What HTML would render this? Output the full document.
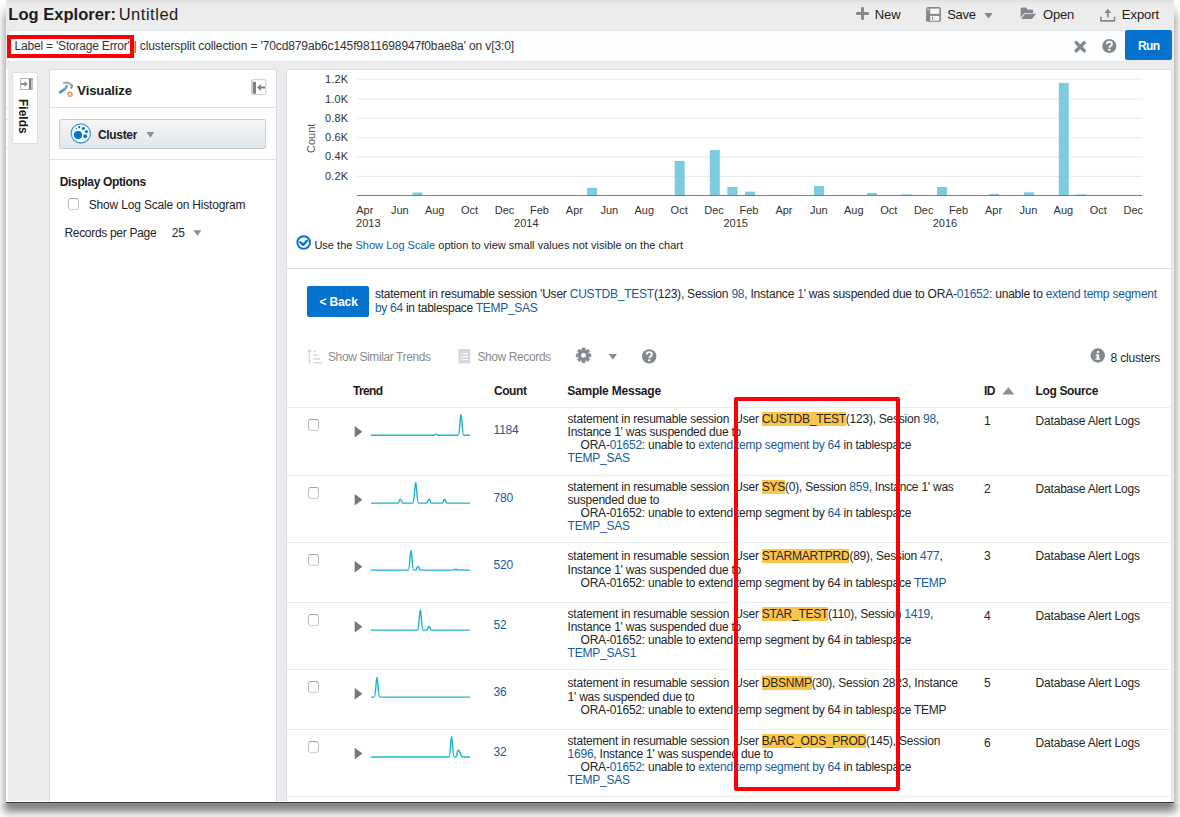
<!DOCTYPE html>
<html>
<head>
<meta charset="utf-8">
<title>Log Explorer</title>
<style>
*{box-sizing:border-box;margin:0;padding:0}
html,body{width:1180px;height:817px;overflow:hidden;background:#fff}
body{font-family:"Liberation Sans",sans-serif;font-size:12px;color:#252525;position:relative}
.abs{position:absolute}
#win{position:absolute;left:6px;top:-40px;width:1168px;height:842px;background:#ececec;box-shadow:0 1.2px 0 0 #3a3a3a;overflow:hidden}
#app{position:absolute;left:-6px;top:40px;width:1180px;height:817px}
a,.lk{color:#145c9e;text-decoration:none}
.panel{position:absolute;background:#fff;border:1px solid #d9e0e8}
.t{position:absolute;white-space:nowrap;line-height:14px;font-size:12px}
.hl{background:#fbc54a}
.hr{position:absolute;left:287px;width:883px;height:1px;background:#e8ecef}
.cb{position:absolute;left:308px;width:11px;height:12px;border:1px solid #bdbdbd;border-top-color:#a2a2a2;border-bottom-color:#d2d2d2;border-radius:3px;background:#fff}
.tri{position:absolute;left:354.7px;width:0;height:0;border-left:7.7px solid #73777d;border-top:5.8px solid transparent;border-bottom:5.8px solid transparent}
.m i{display:inline-block;width:13px}
q{quotes:none;margin-left:1.7px;margin-right:-1.7px}
q:before,q:after{content:none}
</style>
</head>
<body>
<div class="abs" style="left:6px;top:780px;width:1168px;height:22px;box-shadow:0 8px 9px 2px rgba(0,0,0,.5);clip-path:inset(23.3px -20px -40px -20px)"></div>
<div class="abs" style="left:0;top:0;width:6px;height:803.2px;background:linear-gradient(to right,#f1f1f1,#e6e6e6 25%,#d4d4d4 55%,#c1c1c1)"></div>
<div class="abs" style="left:1174px;top:0;width:6px;height:803.2px;background:linear-gradient(to left,#f1f1f1,#e6e6e6 25%,#d4d4d4 55%,#c1c1c1)"></div>
<div class="abs" style="left:0;top:0;width:1180px;height:20px;background:linear-gradient(#fff,rgba(255,255,255,.85) 30%,rgba(255,255,255,0))"></div>
<div id="win"><div id="app">

<div class="abs" style="left:6px;top:801px;width:1168px;height:1px;background:#fff"></div>
<div class="abs" style="left:6px;top:0;width:1168px;height:5px;background:linear-gradient(#dfdfdf,#e6e6e6 50%,#ececec)"></div>
<!-- query bar -->
<div class="abs" style="left:8px;top:30px;width:1118px;height:31.5px;background:#fcfdfe;border:1px solid #e1e7eb;border-right:none;border-radius:2px 0 0 2px"></div>
<div class="abs" style="left:7px;top:35px;width:127px;height:22.6px;border:4px solid #fb0007"></div>
<div class="abs" style="left:1125px;top:29.5px;width:46.5px;height:30.3px;background:#0572ce;border-radius:2px"></div>

<!-- panels -->
<div class="abs" style="left:6px;top:69px;width:2px;height:740px;background:#fff"></div>
<div class="abs" style="left:6px;top:107px;width:2px;height:1px;background:#e3e8ee"></div><div class="abs" style="left:6px;top:119px;width:2px;height:1px;background:#e3e8ee"></div><div class="abs" style="left:6px;top:148px;width:2px;height:1px;background:#e3e8ee"></div>
<div class="panel" style="left:12px;top:72px;width:26px;height:72px;border-radius:2px"></div>
<div class="panel" style="left:49px;top:69px;width:228px;height:740px"></div>
<div class="abs" style="left:50px;top:107px;width:226px;height:1px;background:#dde3e9"></div>
<div class="abs" style="left:50px;top:159px;width:226px;height:1px;background:#dde3e9"></div>
<div class="panel" style="left:286px;top:69px;width:886px;height:200px"></div>
<div class="panel" style="left:286px;top:268px;width:886px;height:560px"></div>

<!-- fields tab -->
<div class="t" style="left:29.5px;top:98.7px;font-weight:bold;color:#1c1c1c;transform-origin:0 0;transform:rotate(90deg)">Fields</div>

<!-- visualize panel -->
<div class="abs" style="left:59.3px;top:119.3px;width:206.5px;height:29.5px;border:1px solid #c4ced7;background:linear-gradient(#f4f6f7,#e3e7ea);border-radius:2px"></div>
<div class="cb" style="left:68px;top:198px;height:11.5px"></div>

<!-- chart y title -->
<div class="t" style="left:304.5px;top:153px;font-size:11px;line-height:13px;color:#555;transform-origin:0 0;transform:rotate(-90deg)">Count</div>

<!-- back -->
<div class="abs" style="left:307px;top:286.3px;width:62px;height:30.5px;background:#0572ce;border-radius:2px"></div>

<div class="t" style="left:8.3px;top:5.4px;font-size:16.5px;line-height:19px;font-weight:bold;color:#1c1c1c;letter-spacing:0.033px;">Log Explorer:</div>
<div class="t" style="left:118.7px;top:5.4px;font-size:16.5px;line-height:19px;color:#1c1c1c;letter-spacing:0.518px;">Untitled</div>
<div class="t" style="left:874.8px;top:6.7px;font-size:13px;line-height:15px;color:#1c1c1c;letter-spacing:-0.105px;">New</div>
<div class="t" style="left:947.2px;top:6.7px;font-size:13px;line-height:15px;color:#1c1c1c;letter-spacing:-0.285px;">Save</div>
<div class="t" style="left:1043.0px;top:6.7px;font-size:13px;line-height:15px;color:#1c1c1c;letter-spacing:-0.178px;">Open</div>
<div class="t" style="left:1121.8px;top:6.7px;font-size:13px;line-height:15px;color:#1c1c1c;letter-spacing:-0.046px;">Export</div>
<div class="t" style="left:14.6px;top:39.1px;color:#333;letter-spacing:-0.202px;">Label = 'Storage Error'</div>
<div class="t" style="left:133.6px;top:39.1px;color:#333;letter-spacing:-0.116px;">| clustersplit collection = '70cd879ab6c145f9811698947f0bae8a' on v[3:0]</div>
<div class="t" style="left:1138.0px;top:38.9px;font-weight:bold;color:#fff;letter-spacing:-0.676px;">Run</div>
<div class="t" style="left:77.3px;top:83.3px;font-size:13px;line-height:15px;font-weight:bold;color:#1c1c1c;letter-spacing:-0.090px;">Visualize</div>
<div class="t" style="left:98.0px;top:127.6px;font-weight:bold;color:#1c1c1c;letter-spacing:-0.335px;">Cluster</div>
<div class="t" style="left:59.8px;top:174.8px;font-weight:bold;color:#1c1c1c;letter-spacing:-0.357px;">Display Options</div>
<div class="t" style="left:88.8px;top:197.9px;letter-spacing:-0.179px;">Show Log Scale on Histogram</div>
<div class="t" style="left:64.4px;top:225.8px;letter-spacing:-0.302px;">Records per Page</div>
<div class="t" style="left:171.8px;top:225.8px;letter-spacing:-0.180px;">25</div>
<div class="t" style="left:325.0px;top:72.9px;font-size:11px;line-height:13px;color:#333;letter-spacing:0.115px;">1.2K</div>
<div class="t" style="left:325.0px;top:92.5px;font-size:11px;line-height:13px;color:#333;letter-spacing:0.115px;">1.0K</div>
<div class="t" style="left:325.0px;top:111.7px;font-size:11px;line-height:13px;color:#333;letter-spacing:0.115px;">0.8K</div>
<div class="t" style="left:325.0px;top:131.2px;font-size:11px;line-height:13px;color:#333;letter-spacing:0.115px;">0.6K</div>
<div class="t" style="left:325.0px;top:150.4px;font-size:11px;line-height:13px;color:#333;letter-spacing:0.115px;">0.4K</div>
<div class="t" style="left:325.0px;top:169.7px;font-size:11px;line-height:13px;color:#333;letter-spacing:0.115px;">0.2K</div>
<div class="t" style="left:356.2px;top:203.7px;font-size:11px;line-height:13px;color:#333;">Apr</div>
<div class="t" style="left:390.9px;top:203.7px;font-size:11px;line-height:13px;color:#333;">Jun</div>
<div class="t" style="left:424.9px;top:203.7px;font-size:11px;line-height:13px;color:#333;">Aug</div>
<div class="t" style="left:461.0px;top:203.7px;font-size:11px;line-height:13px;color:#333;">Oct</div>
<div class="t" style="left:494.7px;top:203.7px;font-size:11px;line-height:13px;color:#333;">Dec</div>
<div class="t" style="left:530.0px;top:203.7px;font-size:11px;line-height:13px;color:#333;">Feb</div>
<div class="t" style="left:565.8px;top:203.7px;font-size:11px;line-height:13px;color:#333;">Apr</div>
<div class="t" style="left:600.4px;top:203.7px;font-size:11px;line-height:13px;color:#333;">Jun</div>
<div class="t" style="left:634.5px;top:203.7px;font-size:11px;line-height:13px;color:#333;">Aug</div>
<div class="t" style="left:670.6px;top:203.7px;font-size:11px;line-height:13px;color:#333;">Oct</div>
<div class="t" style="left:704.3px;top:203.7px;font-size:11px;line-height:13px;color:#333;">Dec</div>
<div class="t" style="left:739.5px;top:203.7px;font-size:11px;line-height:13px;color:#333;">Feb</div>
<div class="t" style="left:775.4px;top:203.7px;font-size:11px;line-height:13px;color:#333;">Apr</div>
<div class="t" style="left:810.0px;top:203.7px;font-size:11px;line-height:13px;color:#333;">Jun</div>
<div class="t" style="left:844.0px;top:203.7px;font-size:11px;line-height:13px;color:#333;">Aug</div>
<div class="t" style="left:880.2px;top:203.7px;font-size:11px;line-height:13px;color:#333;">Oct</div>
<div class="t" style="left:913.9px;top:203.7px;font-size:11px;line-height:13px;color:#333;">Dec</div>
<div class="t" style="left:949.1px;top:203.7px;font-size:11px;line-height:13px;color:#333;">Feb</div>
<div class="t" style="left:985.0px;top:203.7px;font-size:11px;line-height:13px;color:#333;">Apr</div>
<div class="t" style="left:1019.6px;top:203.7px;font-size:11px;line-height:13px;color:#333;">Jun</div>
<div class="t" style="left:1053.6px;top:203.7px;font-size:11px;line-height:13px;color:#333;">Aug</div>
<div class="t" style="left:1089.8px;top:203.7px;font-size:11px;line-height:13px;color:#333;">Oct</div>
<div class="t" style="left:1123.5px;top:203.7px;font-size:11px;line-height:13px;color:#333;">Dec</div>
<div class="t" style="left:356.1px;top:216.5px;font-size:11px;line-height:13px;color:#333;">2013</div>
<div class="t" style="left:514.1px;top:216.5px;font-size:11px;line-height:13px;color:#333;">2014</div>
<div class="t" style="left:723.4px;top:216.5px;font-size:11px;line-height:13px;color:#333;">2015</div>
<div class="t" style="left:932.7px;top:216.5px;font-size:11px;line-height:13px;color:#333;">2016</div>
<div class="t" style="left:314.4px;top:238.7px;font-size:11px;line-height:13px;letter-spacing:0.015px;">Use the <a>Show Log Scale</a> option to view small values not visible on the chart</div>
<div class="t" style="left:319.4px;top:294.7px;font-weight:bold;color:#fff;letter-spacing:-0.122px;">&lt; Back</div>
<div class="t" style="left:374.9px;top:286.9px;letter-spacing:-0.222px;">statement in resumable session 'User <a>CUSTDB_TEST</a>(123), Session <a>98</a>, Instance <a>1</a>' was suspended due to ORA-<a>01652</a>: unable to <a>extend temp segment</a></div>
<div class="t" style="left:374.9px;top:300.6px;letter-spacing:-0.284px;"><a>by 64</a> in tablespace <a>TEMP_SAS</a></div>
<div class="t" style="left:328.0px;top:349.6px;color:#8c8c8c;letter-spacing:-0.387px;">Show Similar Trends</div>
<div class="t" style="left:477.4px;top:349.6px;color:#8c8c8c;letter-spacing:-0.387px;">Show Records</div>
<div class="t" style="left:1110.6px;top:350.5px;letter-spacing:-0.196px;">8 clusters</div>
<div class="t" style="left:352.9px;top:383.7px;font-weight:bold;color:#1c1c1c;letter-spacing:-0.594px;">Trend</div>
<div class="t" style="left:493.9px;top:383.7px;font-weight:bold;color:#1c1c1c;letter-spacing:-0.411px;">Count</div>
<div class="t" style="left:567.2px;top:383.7px;font-weight:bold;color:#1c1c1c;letter-spacing:-0.216px;">Sample Message</div>
<div class="t" style="left:983.9px;top:383.6px;font-weight:bold;color:#1c1c1c;letter-spacing:-0.450px;">ID</div>
<div class="t" style="left:1035.5px;top:383.6px;font-weight:bold;color:#1c1c1c;letter-spacing:-0.352px;">Log Source</div>
<div class="t" style="left:493.6px;top:422.8px;color:#145c9e;letter-spacing:-0.24px">1184</div>
<div class="t" style="left:983.9px;top:413.7px;letter-spacing:-0.24px">1</div>
<div class="t" style="left:1035.6px;top:413.7px;letter-spacing:-0.204px;">Database Alert Logs</div>
<div class="t m" style="left:567.6px;top:412.8px;line-height:13px;letter-spacing:-0.24px">statement in resumable session <q>'</q>User <span class=hl>CUSTDB_TEST</span>(123), Session <a>98</a>,</div>
<div class="t m" style="left:567.6px;top:425.9px;line-height:13px;letter-spacing:-0.24px">Instance 1' was suspended due to</div>
<div class="t m" style="left:567.6px;top:439.0px;line-height:13px;letter-spacing:-0.24px"><i></i>ORA-<a>01652</a>: unable to <a>extend temp segment by 64</a> in tablespace</div>
<div class="t m" style="left:567.6px;top:452.1px;line-height:13px;letter-spacing:-0.24px"><a>TEMP_SAS</a></div>
<div class="t" style="left:493.6px;top:490.7px;color:#145c9e;letter-spacing:-0.24px">780</div>
<div class="t" style="left:983.9px;top:481.6px;letter-spacing:-0.24px">2</div>
<div class="t" style="left:1035.6px;top:481.6px;letter-spacing:-0.204px;">Database Alert Logs</div>
<div class="t m" style="left:567.6px;top:480.7px;line-height:13px;letter-spacing:-0.24px">statement in resumable session <q>'</q>User <span class=hl>SYS</span>(0), Session <a>859</a>, Instance 1' was</div>
<div class="t m" style="left:567.6px;top:493.8px;line-height:13px;letter-spacing:-0.24px">suspended due to</div>
<div class="t m" style="left:567.6px;top:506.9px;line-height:13px;letter-spacing:-0.24px"><i></i>ORA-01652: unable to extend temp segment by <a>64</a> in tablespace</div>
<div class="t m" style="left:567.6px;top:520.0px;line-height:13px;letter-spacing:-0.24px"><a>TEMP_SAS</a></div>
<div class="t" style="left:493.6px;top:557.7px;color:#145c9e;letter-spacing:-0.24px">520</div>
<div class="t" style="left:983.9px;top:548.6px;letter-spacing:-0.24px">3</div>
<div class="t" style="left:1035.6px;top:548.6px;letter-spacing:-0.204px;">Database Alert Logs</div>
<div class="t m" style="left:567.6px;top:550.2px;line-height:13px;letter-spacing:-0.24px">statement in resumable session <q>'</q>User <span class=hl>STARMARTPRD</span>(89), Session <a>477</a>,</div>
<div class="t m" style="left:567.6px;top:563.7px;line-height:13px;letter-spacing:-0.24px">Instance 1' was suspended due to</div>
<div class="t m" style="left:567.6px;top:577.1px;line-height:13px;letter-spacing:-0.24px"><i></i>ORA-01652: unable to extend temp segment by 64 in tablespace <a>TEMP</a></div>
<div class="t" style="left:493.6px;top:617.7px;color:#145c9e;letter-spacing:-0.24px">52</div>
<div class="t" style="left:983.9px;top:608.6px;letter-spacing:-0.24px">4</div>
<div class="t" style="left:1035.6px;top:608.6px;letter-spacing:-0.204px;">Database Alert Logs</div>
<div class="t m" style="left:567.6px;top:607.7px;line-height:13px;letter-spacing:-0.24px">statement in resumable session <q>'</q>User <span class=hl>STAR_TEST</span>(110), Session <a>1419</a>,</div>
<div class="t m" style="left:567.6px;top:620.8px;line-height:13px;letter-spacing:-0.24px">Instance 1' was suspended due to</div>
<div class="t m" style="left:567.6px;top:633.9px;line-height:13px;letter-spacing:-0.24px"><i></i>ORA-01652: unable to extend temp segment by 64 in tablespace</div>
<div class="t m" style="left:567.6px;top:647.0px;line-height:13px;letter-spacing:-0.24px"><a>TEMP_SAS1</a></div>
<div class="t" style="left:493.6px;top:684.7px;color:#145c9e;letter-spacing:-0.24px">36</div>
<div class="t" style="left:983.9px;top:675.6px;letter-spacing:-0.24px">5</div>
<div class="t" style="left:1035.6px;top:675.6px;letter-spacing:-0.204px;">Database Alert Logs</div>
<div class="t m" style="left:567.6px;top:677.2px;line-height:13px;letter-spacing:-0.24px">statement in resumable session <q>'</q>User <span class=hl>DBSNMP</span>(30), Session 2823, Instance</div>
<div class="t m" style="left:567.6px;top:690.7px;line-height:13px;letter-spacing:-0.24px">1' was suspended due to</div>
<div class="t m" style="left:567.6px;top:704.1px;line-height:13px;letter-spacing:-0.24px"><i></i>ORA-01652: unable to extend temp segment by 64 in tablespace TEMP</div>
<div class="t" style="left:493.6px;top:744.6px;color:#145c9e;letter-spacing:-0.24px">32</div>
<div class="t" style="left:983.9px;top:735.5px;letter-spacing:-0.24px">6</div>
<div class="t" style="left:1035.6px;top:735.5px;letter-spacing:-0.204px;">Database Alert Logs</div>
<div class="t m" style="left:567.6px;top:734.6px;line-height:13px;letter-spacing:-0.24px">statement in resumable session <q>'</q>User <span class=hl>BARC_ODS_PROD</span>(145), Session</div>
<div class="t m" style="left:567.6px;top:747.7px;line-height:13px;letter-spacing:-0.24px"><a>1696</a>, Instance 1' was suspended due to</div>
<div class="t m" style="left:567.6px;top:760.8px;line-height:13px;letter-spacing:-0.24px"><i></i>ORA-<a>01652</a>: unable to <a>extend temp segment by 64</a> in tablespace</div>
<div class="t m" style="left:567.6px;top:773.9px;line-height:13px;letter-spacing:-0.24px"><a>TEMP_SAS</a></div>
<div class="hr" style="top:407px"></div>
<div class="cb" style="top:418.9px"></div>
<div class="hr" style="top:475px"></div>
<div class="cb" style="top:486.8px"></div>
<div class="hr" style="top:542px"></div>
<div class="cb" style="top:553.8px"></div>
<div class="hr" style="top:602px"></div>
<div class="cb" style="top:613.8px"></div>
<div class="hr" style="top:669px"></div>
<div class="cb" style="top:680.8px"></div>
<div class="hr" style="top:729px"></div>
<div class="cb" style="top:740.7px"></div>
<div class="hr" style="top:796px"></div>

<svg class="abs" style="left:0;top:0" width="1180" height="817" viewBox="0 0 1180 817">
<rect x="357" y="78.7" width="785.5" height="1" fill="#e6eaed"/>
<rect x="357" y="98.4" width="785.5" height="1" fill="#e6eaed"/>
<rect x="357" y="117.7" width="785.5" height="1" fill="#e6eaed"/>
<rect x="357" y="137.3" width="785.5" height="1" fill="#e6eaed"/>
<rect x="357" y="156.5" width="785.5" height="1" fill="#e6eaed"/>
<rect x="357" y="175.9" width="785.5" height="1" fill="#e6eaed"/>
<rect x="412.5" y="192.5" width="10" height="2.7" fill="#7ccbdf"/>
<rect x="587" y="187.8" width="10" height="7.4" fill="#7ccbdf"/>
<rect x="674.7" y="161" width="10" height="34.2" fill="#7ccbdf"/>
<rect x="709.8" y="150" width="10" height="45.2" fill="#7ccbdf"/>
<rect x="727.4" y="187" width="10" height="8.2" fill="#7ccbdf"/>
<rect x="745" y="191.6" width="10" height="3.6" fill="#7ccbdf"/>
<rect x="814" y="185.9" width="10" height="9.3" fill="#7ccbdf"/>
<rect x="867" y="193" width="10" height="2.2" fill="#7ccbdf"/>
<rect x="901.6" y="194.3" width="10" height="0.9" fill="#7ccbdf"/>
<rect x="937" y="187" width="10" height="8.2" fill="#7ccbdf"/>
<rect x="989" y="193.9" width="10" height="1.3" fill="#7ccbdf"/>
<rect x="1024" y="192.3" width="10" height="2.9" fill="#7ccbdf"/>
<rect x="1058.8" y="82.9" width="10" height="112.3" fill="#7ccbdf"/>
<rect x="1076.3" y="194.3" width="10" height="0.9" fill="#7ccbdf"/>
<rect x="357" y="195" width="785.5" height="1" fill="#7d7d7d"/>
<path d="M354.7 426.0 V437.6 L362.4 431.8 Z" fill="#74787e"/>
<path d="M371 435.2 L433.9 435.2 C435.2 435.2 434.9 434.1 436 434.1 C437.1 434.1 436.8 435.2 438.1 435.2 L458.2 435.2 C459.9 435.2 459.9 414.5 461 414.5 C462.1 414.5 462.1 435.2 463.8 435.2 L470 435.2" fill="none" stroke="#1eb4d1" stroke-width="1.45"/>
<path d="M354.7 493.9 V505.5 L362.4 499.7 Z" fill="#74787e"/>
<path d="M371 503.1 L397.9 503.1 C399.4 503.1 398.9 499.1 400.3 499.1 C401.7 499.1 401.2 503.1 402.7 503.1 L412.9 503.1 C414.6 503.1 414.6 482.5 415.7 482.5 C416.8 482.5 416.8 503.1 418.5 503.1 L426.6 503.1 C428.1 503.1 427.6 499.3 429 499.3 C430.4 499.3 429.9 503.1 431.4 503.1 L442.2 503.1 C443.7 503.1 443.2 499.5 444.6 499.5 C446.0 499.5 445.5 503.1 447.0 503.1 L470 503.1" fill="none" stroke="#1eb4d1" stroke-width="1.45"/>
<path d="M354.7 560.9 V572.5 L362.4 566.7 Z" fill="#74787e"/>
<path d="M371 570.1 L408.2 570.1 C409.9 570.1 409.9 550.5 411 550.5 C412.1 550.5 412.1 570.1 413.8 570.1 L415.6 570.1 C417.1 570.1 416.6 566.5 418 566.5 C419.4 566.5 418.9 570.1 420.4 570.1 L453.2 570.1 C454.8 570.1 454.3 569.3 455.8 569.3 C457.3 569.3 456.8 570.1 458.4 570.1 L459.4 570.1 C461.0 570.1 460.5 569.7 462 569.7 C463.5 569.7 463.0 570.1 464.6 570.1 L470 570.1" fill="none" stroke="#1eb4d1" stroke-width="1.45"/>
<path d="M354.7 620.9 V632.5 L362.4 626.7 Z" fill="#74787e"/>
<path d="M371 630.1 L417.5 630.1 C419.2 630.1 419.2 609.9 420.3 609.9 C421.4 609.9 421.4 630.1 423.1 630.1 L426.6 630.1 C428.1 630.1 427.6 626.5 429 626.5 C430.4 626.5 429.9 630.1 431.4 630.1 L470 630.1" fill="none" stroke="#1eb4d1" stroke-width="1.45"/>
<path d="M354.7 687.9 V699.5 L362.4 693.7 Z" fill="#74787e"/>
<path d="M371 697.1 L374.2 697.1 C375.9 697.1 375.9 677.5 377 677.5 C378.1 677.5 378.1 697.1 379.8 697.1 L470 697.1" fill="none" stroke="#1eb4d1" stroke-width="1.45"/>
<path d="M354.7 747.8 V759.4 L362.4 753.6 Z" fill="#74787e"/>
<path d="M371 757.0 L449.0 757.0 C450.6 757.0 450.6 736.7 451.6 736.7 C452.6 736.7 452.6 757.0 454.2 757.0 L455.8 757.0 C457.2 757.0 457.2 749.9 458 749.9 C460.3 749.9 460.3 757.0 463.2 757.0 L470 757.0" fill="none" stroke="#1eb4d1" stroke-width="1.45"/>
<path d="M857.3 13.45 H867.7 M862.5 8.3 V18.6" stroke="#83888f" stroke-width="3" stroke-linecap="round" fill="none"/>
<rect x="926.1" y="7.1" width="14.8" height="14.7" rx="1.6" fill="#83888f"/>
<rect x="930.2" y="8.6" width="9.1" height="5.3" fill="#f6f6f6"/>
<rect x="930.2" y="15.9" width="9.1" height="4.8" fill="#f6f6f6"/>
<rect x="932" y="16.8" width="1.1" height="3" fill="#83888f"/>
<rect x="927.4" y="8.7" width="1.4" height="1.6" fill="#f0f0f0"/>
<path d="M984.4 12.9 H992.6 L988.5 18.4 Z" fill="#83888f"/>
<path d="M1020.7 8.4 q0 -1 1 -1 h4.2 q1 0 1 1 v1.2 h5.2 q1 0 1 1 v2.3 H1025.6 q-1.3 0 -2 1.1 L1020.7 17.4 Z" fill="#83888f"/>
<path d="M1021.4 19 L1024.6 14.3 q.45 -.65 1.3 -.65 H1036 l-3.5 4.7 q-.45 .65 -1.3 .65 Z" fill="#83888f"/>
<path d="M1100.9 17.4 V20.9 H1114.5 V17.4" stroke="#83888f" stroke-width="1.6" fill="none" stroke-linejoin="round" stroke-linecap="round"/>
<path d="M1107.8 8.7 L1111.3 12.9 H1108.7 V17.2 q-.9 .8 -1.8 0 V12.9 H1104.3 Z" fill="#83888f"/>
<path d="M1076.2 42.6 L1084.3 50.7 M1084.3 42.6 L1076.2 50.7" stroke="#83888f" stroke-width="3.4" stroke-linecap="round" fill="none"/>
<circle cx="1109.3" cy="46" r="7.1" fill="#83888f"/>
<path d="M1106.83 44.13 q0 -2.4 2.56 -2.4 q2.56 0 2.56 2.17 q0 1.28 -1.28 1.97 q-1.18 0.69 -1.18 1.87" stroke="#fcfdfe" stroke-width="1.87" fill="none" stroke-linecap="butt"/>
<rect x="1108.26" y="48.86" width="2.07" height="1.97" fill="#fcfdfe"/>
<circle cx="649.2" cy="356.4" r="7.2" fill="#83888f"/>
<path d="M646.70 354.50 q0 -2.4 2.60 -2.4 q2.60 0 2.60 2.20 q0 1.30 -1.30 2.00 q-1.20 0.70 -1.20 1.90" stroke="#fff" stroke-width="1.90" fill="none" stroke-linecap="butt"/>
<rect x="648.15" y="359.30" width="2.10" height="2.00" fill="#fff"/>
<circle cx="1097.8" cy="355.5" r="7.2" fill="#83888f"/>
<path d="M1096.2 354.2 h2.9 v4.2 h1 v1.3 h-4.6 v-1.3 h1.1 v-2.9 h-1.1 Z M1096.9 350.9 h2.2 v2.1 h-2.2 Z" fill="#fff"/>
<path d="M59.2 92.9 L65.2 88.9" stroke="#4a9bd9" stroke-width="2.8" fill="none"/>
<path d="M65.3 88.9 L67.3 85.2" stroke="#868d97" stroke-width="2.3" fill="none"/>
<path d="M63.2 83.3 Q68.6 81.0 72.5 86.3" stroke="#a3aab6" stroke-width="2.3" fill="none"/>
<path d="M72.4 86.0 L70.7 88.5" stroke="#818995" stroke-width="1.7" fill="none"/>
<circle cx="70" cy="94.2" r="2.05" fill="#fbe6cf" stroke="#d5762b" stroke-width="1.5" stroke-dasharray="1.15 0.46"/>
<rect x="251.5" y="79.7" width="14.3" height="15" fill="#fff" stroke="#c9ccce" stroke-width="1" rx="1"/>
<rect x="252" y="80.2" width="1.3" height="14" fill="#d0d0d0"/>
<rect x="253" y="81.8" width="3" height="11.9" fill="#7d8289"/>
<path d="M257 87.45 L260.9 83.9 V86.5 H265.3 V88.4 H260.9 V91 Z" fill="#7d8289"/>
<rect x="20.5" y="78.5" width="12" height="11" fill="#fff" stroke="#b4b4b4" stroke-width="1"/>
<rect x="28.9" y="78.5" width="2.6" height="11" fill="#7d8289"/>
<rect x="31.5" y="78.5" width="1.2" height="11" fill="#c4c4c4"/>
<path d="M27.6 83.9 L24.6 81.1 V83 H21 V84.8 H24.6 V86.8 Z" fill="#7d8289"/>
<circle cx="80.8" cy="133.4" r="9.6" fill="#fafcfe" stroke="#4a9bdc" stroke-width="1.3"/>
<circle cx="78" cy="135" r="4.1" fill="#0572ce"/>
<circle cx="85.1" cy="136.2" r="1.95" fill="#0572ce"/>
<circle cx="86.4" cy="131.5" r="1.55" fill="#0572ce"/>
<circle cx="83.3" cy="128.4" r="1.5" fill="#0572ce"/>
<circle cx="79.3" cy="127.2" r="1.1" fill="#0572ce"/>
<circle cx="76.5" cy="128.4" r="0.75" fill="#0572ce"/>
<circle cx="74.6" cy="130.5" r="0.45" fill="#0572ce"/>
<path d="M146.4 132 H154.4 L150.4 137.8 Z" fill="#8a8f95"/>
<path d="M193.5 230.2 H201.4 L197.45 235.8 Z" fill="#8a8f95"/>
<circle cx="303.7" cy="242.5" r="6.3" fill="#fff" stroke="#0572ce" stroke-width="2"/>
<path d="M300.3 242.3 L303.2 244.9 L306.9 240.7" stroke="#0572ce" stroke-width="2.3" fill="none" stroke-linecap="round" stroke-linejoin="round"/>
<path d="M309.45 348.6 L312 352 H310.2 V363.6 H308.7 V352 H306.9 Z" fill="#d6d8da"/>
<rect x="313.2" y="350.5" width="2.7" height="1.4" fill="#d6d8da"/>
<rect x="313.2" y="354.3" width="4.8" height="1.4" fill="#d6d8da"/>
<rect x="313.2" y="358.3" width="6.8" height="1.4" fill="#d6d8da"/>
<rect x="313.2" y="362.1" width="8.8" height="1.4" fill="#d6d8da"/>
<rect x="458.4" y="349" width="11.8" height="14.4" fill="#d5d7d9"/>
<rect x="461" y="353.0" width="1.1" height="1.2" fill="#fff"/><rect x="463" y="353.0" width="4.8" height="1.2" fill="#fff"/>
<rect x="461" y="356.0" width="1.1" height="1.2" fill="#fff"/><rect x="463" y="356.0" width="4.8" height="1.2" fill="#fff"/>
<rect x="461" y="358.9" width="1.1" height="1.2" fill="#fff"/><rect x="463" y="358.9" width="4.8" height="1.2" fill="#fff"/>
<path d="M581.92 350.10 L581.99 348.01 L585.11 348.01 L585.18 350.10 L586.12 350.49 L587.63 349.06 L589.84 351.27 L588.41 352.78 L588.80 353.72 L590.89 353.79 L590.89 356.91 L588.80 356.98 L588.41 357.92 L589.84 359.43 L587.63 361.64 L586.12 360.21 L585.18 360.60 L585.11 362.69 L581.99 362.69 L581.92 360.60 L580.98 360.21 L579.47 361.64 L577.26 359.43 L578.69 357.92 L578.30 356.98 L576.21 356.91 L576.21 353.79 L578.30 353.72 L578.69 352.78 L577.26 351.27 L579.47 349.06 L580.98 350.49 Z M586.25 355.35 A2.7 2.7 0 1 0 580.85 355.35 A2.7 2.7 0 1 0 586.25 355.35 Z" fill="#83888f" fill-rule="evenodd" stroke="#83888f" stroke-width="0.5" stroke-linejoin="round"/>
<path d="M608.7 354 H617 L612.85 359.5 Z" fill="#83888f"/>
<path d="M1002.3 394.6 H1014.4 L1008.35 387.2 Z" fill="#8a8f95"/>
</svg>

<!-- red annotation -->
<div class="abs" style="left:734px;top:397px;width:166px;height:393.5px;border:4px solid #fb0007;border-radius:2px"></div>

</div></div>
</body>
</html>
